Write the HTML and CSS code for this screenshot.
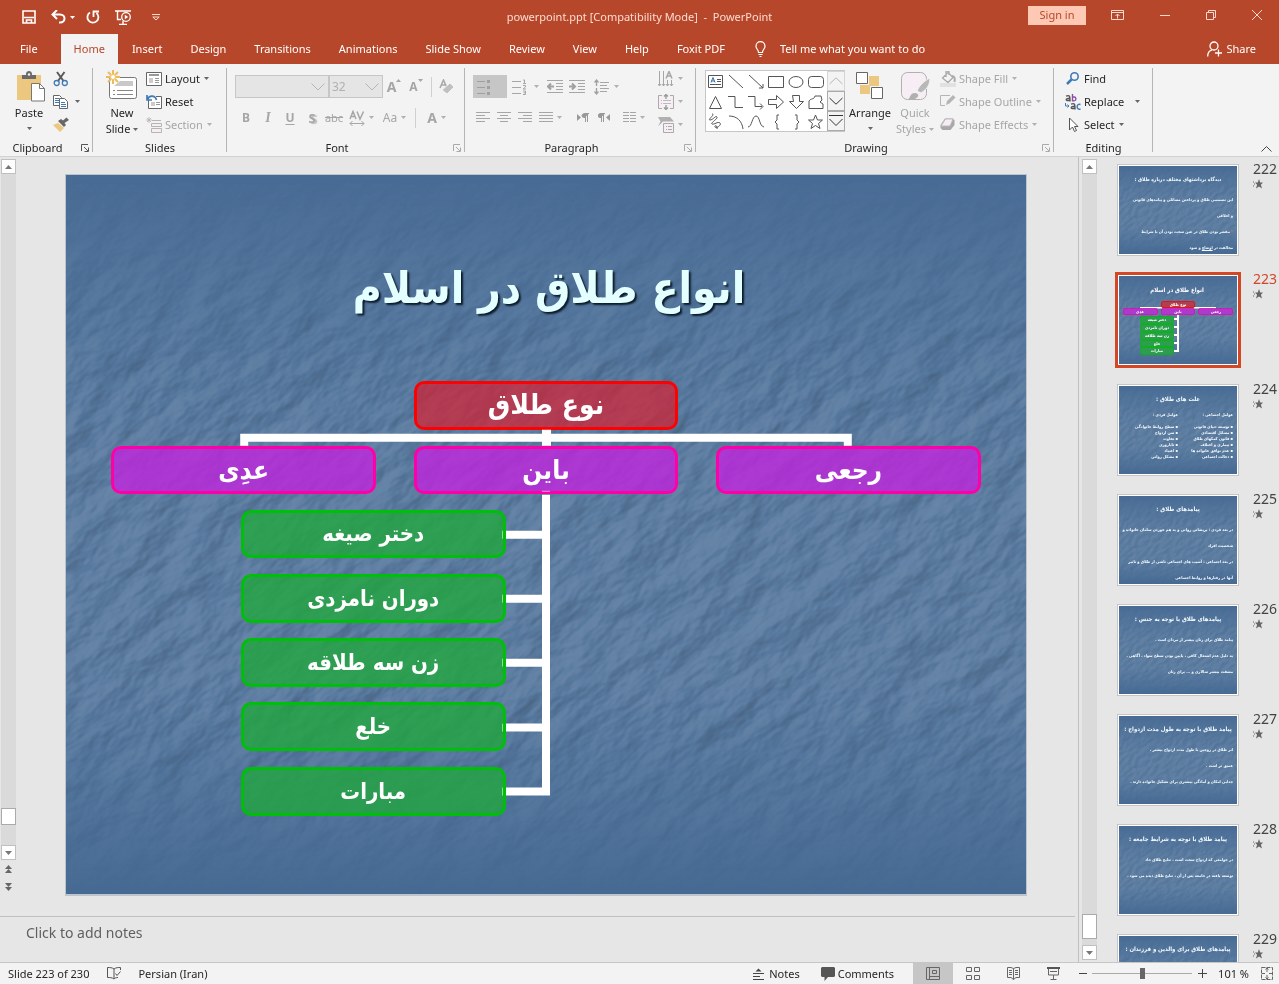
FILE: index.html
```html
<!DOCTYPE html>
<html lang="en">
<head>
<meta charset="utf-8">
<title>powerpoint.ppt [Compatibility Mode] - PowerPoint</title>
<link rel="stylesheet" href="styles.css">
</head>
<body>
<svg class="defs" width="0" height="0" aria-hidden="true">
  <defs>
    <linearGradient id="sea" x1="0" y1="0" x2="0" y2="1">
      <stop offset="0" stop-color="#476a94"/><stop offset=".12" stop-color="#4e7199"/><stop offset=".4" stop-color="#597a9f"/><stop offset=".7" stop-color="#597a9f"/><stop offset=".88" stop-color="#4e7199"/><stop offset="1" stop-color="#456992"/>
    </linearGradient>
    <linearGradient id="fade" x1="0" y1="0" x2="0" y2="1">
      <stop offset="0" stop-color="#000"/><stop offset=".3" stop-color="#fff"/><stop offset=".75" stop-color="#fff"/><stop offset="1" stop-color="#000"/>
    </linearGradient>
    <mask id="fademask"><rect width="960" height="720" fill="url(#fade)"/></mask>
    <filter id="rock" x="0" y="0" width="1" height="1" color-interpolation-filters="sRGB">
      <feTurbulence type="fractalNoise" baseFrequency="0.018 0.032" numOctaves="4" seed="8"/>
      <feDiffuseLighting surfaceScale="9" diffuseConstant=".78" lighting-color="#fff"><feDistantLight azimuth="250" elevation="45"/></feDiffuseLighting>
    </filter>
    <symbol id="slide-bg" viewBox="0 0 960 720" preserveAspectRatio="none">
      <rect width="960" height="720" fill="url(#sea)"/>
      <g mask="url(#fademask)" class="grain"><rect x="-200" y="-260" width="1360" height="1240" transform="rotate(-38 480 360)" filter="url(#rock)"/></g>
    </symbol>
    <symbol id="down" viewBox="0 0 5 3"><path d="M0 0h5L2.500 3z" fill="currentColor"/></symbol>
    <symbol id="launch" viewBox="0 0 8 8"><path d="M.5 7V.5H7M3 3l4 4M7.500 3.500v4h-4" fill="none" stroke="currentColor"/></symbol>
    <symbol id="star" viewBox="0 0 12 10"><path d="M6 0l1.200 3.500H10L7.900 5.800 9 9.500 6 7.400 3 9.500 4.100 5.800 2 3.500h2.800z" fill="currentColor"/><path d="M0 3h1M1 5h1M0 7h1" stroke="currentColor"/></symbol>
  </defs>
</svg>

<header class="top">
  <div class="titlebar">
    <div class="quick">
      <button class="ico" aria-label="Save"><svg width="14" height="14" viewBox="0 0 14 14"><path d="M1 1h12v12H1zM2 7.500h10M4.500 13V10h5v3" fill="none" stroke="#fff" stroke-width="1.600"/></svg></button>
      <button class="ico undo" aria-label="Undo"><svg width="15" height="14" viewBox="0 0 15 14"><path d="M6 0L1.500 4.500 6 9M2 4.500h7c6 0 6 8 0 8H8" fill="none" stroke="#fff" stroke-width="2"/></svg><svg class="dn light" width="5" height="3"><use href="#down"/></svg></button>
      <button class="ico" aria-label="Repeat"><svg width="14" height="14" viewBox="0 0 14 14"><path d="M4 2.500A5.500 5.500 0 1 0 10.500 3M7.500 7V1.500H13" fill="none" stroke="#fff" stroke-width="1.800"/></svg></button>
      <button class="ico show" aria-label="Start slide show"><svg width="17" height="15" viewBox="0 0 17 15"><path d="M0 1h16M2.500 1v8.500H6M8 11v3M4 14.500h8" fill="none" stroke="#fff" stroke-width="1.400"/><circle cx="11" cy="7" r="4.300" fill="#b7472a" stroke="#fff" stroke-width="1.300"/><path d="M9.800 4.800l3.400 2.200-3.400 2.200z" fill="#fff"/></svg></button>
      <button class="ico" aria-label="Customize"><svg width="8" height="7" viewBox="0 0 8 7"><path d="M0 .5h8M.8 3L4 6l3.200-3z" fill="none" stroke="#fbd9ce"/></svg></button>
    </div>
    <h1 class="doc">powerpoint.ppt [Compatibility Mode]&nbsp; -&nbsp; PowerPoint</h1>
    <div class="win">
      <button class="signin">Sign in</button>
      <button class="ico" aria-label="Ribbon options"><svg width="13" height="10" viewBox="0 0 13 10"><path d="M.5.5h12v9H.5zM.5 2.500h12M6.500 8.500V4M4.500 6l2-2 2 2" fill="none" stroke="#fbd9ce"/></svg></button>
      <button class="ico" aria-label="Minimize"><svg width="10" height="10" viewBox="0 0 10 10"><path d="M0 5.500h10" stroke="#fbd9ce"/></svg></button>
      <button class="ico" aria-label="Restore"><svg width="10" height="10" viewBox="0 0 10 10"><path d="M.5 2.500h7v7h-7zM2.500 2.500v-2h7v7h-2" fill="none" stroke="#fbd9ce"/></svg></button>
      <button class="ico" aria-label="Close"><svg width="10" height="10" viewBox="0 0 10 10"><path d="M0 0l10 10M10 0L0 10" stroke="#fbd9ce"/></svg></button>
    </div>
  </div>
  <nav class="tabs">
    <button class="file">File</button><button class="on">Home</button><button>Insert</button><button>Design</button><button>Transitions</button><button>Animations</button><button>Slide Show</button><button>Review</button><button>View</button><button>Help</button><button>Foxit PDF</button>
    <button class="tell"><svg width="11" height="16" viewBox="0 0 11 16"><path d="M3.500 11.500C3.500 8.500 1 8 1 5.200a4.500 4.500 0 0 1 9 0C10 8 7.500 8.500 7.500 11.500zM3.500 13.500h4M4.500 15.500h2" fill="none" stroke="#fff" stroke-width="1.200"/></svg>Tell me what you want to do</button>
    <button class="share"><svg width="15" height="16" viewBox="0 0 15 16"><circle cx="7" cy="5" r="4" fill="none" stroke="#fff" stroke-width="1.300"/><path d="M.7 15.500c0-3.500 2-6 4.300-6.600M8 12h7M11.500 8.500v7" fill="none" stroke="#fff" stroke-width="1.300"/></svg>Share</button>
  </nav>
</header>

<section class="ribbon" aria-label="Home">
  <div class="group clip">
    <div class="body">
      <button class="big"><svg width="28" height="32" viewBox="0 0 28 32"><path d="M0 5h24v25H0z" fill="#ecc77f"/><path d="M5 9V5h4V4c0-4 6-4 6 0v1h4v4z" fill="#6a6a6a"/><circle cx="12" cy="4.500" r="1.200" fill="#f3f3f3"/><path d="M14.500 13.500h8l5 5V31h-13z" fill="#fff" stroke="#777"/><path d="M22.500 13.500v5h5" fill="none" stroke="#777"/></svg><span>Paste</span><svg class="dn" width="5" height="3"><use href="#down"/></svg></button>
      <div class="col">
        <button class="row" aria-label="Cut"><svg width="16" height="16" viewBox="0 0 16 16"><path d="M4 1l6.500 9M11.500 1L5 10" stroke="#5a5a5a" stroke-width="2" fill="none"/><circle cx="3.700" cy="12" r="2.500" fill="none" stroke="#3f7ab5" stroke-width="1.300"/><circle cx="11.800" cy="12" r="2.500" fill="none" stroke="#3f7ab5" stroke-width="1.300"/></svg></button>
        <button class="row" aria-label="Copy"><svg width="16" height="16" viewBox="0 0 16 16"><path d="M.5 1.500h6l2 2v8h-8z" fill="#fff" stroke="#666"/><path d="M2 4.500h4M2 6.500h4M2 8.500h4" stroke="#3f7ab5"/><path d="M6.500 4.500h5l3 3v7h-8z" fill="#fff" stroke="#666"/><path d="M8 8.500h4M8 10.500h5M8 12.500h5" stroke="#3f7ab5"/></svg><svg class="dn" width="5" height="3"><use href="#down"/></svg></button>
        <button class="row" aria-label="Format painter"><svg width="16" height="16" viewBox="0 0 16 16"><path d="M0 8l5-2 6 5-4 4z" fill="#ecc77f"/><path d="M5 4l6 6 2-2-1.500-2L16 3l-2.500-2.500L10 3.500 8 2z" fill="#666"/></svg></button>
      </div>
    </div>
    <footer>Clipboard<svg class="launch" width="8" height="8"><use href="#launch"/></svg></footer>
  </div>

  <div class="group slides">
    <div class="body">
      <button class="big"><svg width="32" height="32" viewBox="0 0 32 32"><rect x="3.500" y="7.500" width="27" height="21" rx="2" fill="#fff" stroke="#777"/><path d="M14 11h13v5H8z" fill="#c8c8c8"/><path d="M7 20.500h2M11 20.500h16M7 24.500h2M11 24.500h16" stroke="#888"/><circle cx="7" cy="7" r="3" fill="#fff"/><path d="M7 0v4M7 10v4M0 7h4M10 7h4M2 2l3 3M9 9l3 3M12 2L9 5M5 9l-3 3" stroke="#edbb5c" stroke-width="2"/><circle cx="7" cy="7" r="2.500" fill="#fff" stroke="#edbb5c"/></svg><span>New</span><span>Slide <svg class="dn" width="5" height="3"><use href="#down"/></svg></span></button>
      <div class="col">
        <button class="row"><svg width="16" height="16" viewBox="0 0 16 16"><path d="M.5 1.500h15v13H.5z" fill="#fff" stroke="#666"/><path d="M3 4h10" stroke="#999" stroke-width="2"/><path d="M3 7h4v5H3z" fill="#ccc"/><path d="M9 7.500h4M9 9.500h4M9 11.500h4" stroke="#999"/></svg>Layout<svg class="dn" width="5" height="3"><use href="#down"/></svg></button>
        <button class="row"><svg width="16" height="16" viewBox="0 0 16 16"><path d="M2.500 6v8.500h13v-12H10" fill="#fff" stroke="#666"/><path d="M5 8h4v4H5z" fill="#ccc"/><path d="M10 8.500h4M10 10.500h4" stroke="#999"/><path d="M1 1v5h5M1.500 5.500C3 1 9 1 10.500 6" fill="none" stroke="#3f7ab5" stroke-width="1.700"/></svg>Reset</button>
        <button class="row off"><svg width="16" height="16" viewBox="0 0 16 16"><path d="M6 3.500h9M5.500 6.500h10v3h-10zM5.500 11.500h10v4h-10z" fill="#f6eef4" stroke="#b5b5b5"/><path d="M3 0v6M0 3h6M1 1l4 4M5 1L1 5" stroke="#b5b5b5" stroke-width=".8"/></svg>Section<svg class="dn" width="5" height="3"><use href="#down"/></svg></button>
      </div>
    </div>
    <footer>Slides</footer>
  </div>

  <div class="group font off">
    <div class="body lines">
      <div class="line">
        <span class="combo face"><input aria-label="Font" value=""><svg width="14" height="8" viewBox="0 0 14 8"><path d="M.5.5L7 7 13.500.5" fill="none" stroke="currentColor"/></svg></span><span class="combo size"><input aria-label="Font size" value="32"><svg width="14" height="8" viewBox="0 0 14 8"><path d="M.5.5L7 7 13.500.5" fill="none" stroke="currentColor"/></svg></span>
        <button class="t grow" aria-label="Grow font"><b>A</b><svg width="5" height="3" viewBox="0 0 5 3"><path d="M0 3h5L2.500 0z" fill="currentColor"/></svg></button>
        <button class="t shrink" aria-label="Shrink font"><b>A</b><svg width="5" height="3"><use href="#down"/></svg></button>
        <i class="sep"></i>
        <button class="t" aria-label="Clear formatting"><svg width="16" height="16" viewBox="0 0 16 16"><path d="M1 9L4.500 1 8 9M2 6h5" fill="none" stroke="#aaa" stroke-width="1.600"/><path d="M3 11l8-7 4 4-7 7z" fill="#c0c0c0" stroke="#f3f3f3"/></svg></button>
      </div>
      <div class="line">
        <button class="t"><b>B</b></button><button class="t"><i class="it">I</i></button><button class="t"><b class="un">U</b></button><button class="t"><b class="sh">S</b></button><button class="t"><s>abc</s></button>
        <button class="t wide" aria-label="Character spacing"><svg width="16" height="16" viewBox="0 0 16 16"><path d="M1 9L4 1.500 7 9M2 6.500h4M8 1.500L11 9l3.500-7.500" fill="none" stroke="#a6a6a6" stroke-width="1.500"/><path d="M1 13.500h14M3.500 11L1 13.500 3.500 16M12.500 11l2.500 2.500-2.500 2.500" fill="none" stroke="#a6a6a6"/></svg><svg class="dn" width="5" height="3"><use href="#down"/></svg></button>
        <button class="t wide">Aa<svg class="dn" width="5" height="3"><use href="#down"/></svg></button>
        <i class="sep"></i>
        <button class="t wide"><b class="bigA">A</b><svg class="dn" width="5" height="3"><use href="#down"/></svg></button>
      </div>
    </div>
    <footer>Font<svg class="launch" width="8" height="8"><use href="#launch"/></svg></footer>
  </div>

  <div class="group para off">
    <div class="body">
      <div class="lines">
        <div class="line">
          <button class="t bul" aria-label="Bullets"><svg width="14" height="16" viewBox="0 0 14 16"><path d="M0 2.500h8M0 8.500h8M0 14.500h8" stroke="#a0a0a0"/><path d="M10 2.500h3M10 8.500h3M10 14.500h3" stroke="#a0a0a0" stroke-width="3"/></svg></button>
          <button class="t num" aria-label="Numbering"><svg width="14" height="16" viewBox="0 0 14 16"><path d="M0 2.500h9M0 8.500h9M0 14.500h9M11 1h1.500v3.500M11 4.500h3M11 6.500h2.500v1.500L11 10h3M11 12h2.500v3.500H11M11.500 13.800h2" fill="none" stroke="#a6a6a6"/></svg><svg class="dn" width="5" height="3"><use href="#down"/></svg></button>
          <button class="t" aria-label="Decrease indent"><svg width="16" height="14" viewBox="0 0 16 14"><path d="M0 .5h16M9 3.500h7M9 6.500h7M9 9.500h7M0 12.500h16" stroke="#a6a6a6"/><path d="M7 6.500H1M4 3.500l-3 3 3 3" fill="none" stroke="#a0a0a0" stroke-width="2"/></svg></button>
          <button class="t" aria-label="Increase indent"><svg width="16" height="14" viewBox="0 0 16 14"><path d="M0 .5h16M9 3.500h7M9 6.500h7M9 9.500h7M0 12.500h16" stroke="#a6a6a6"/><path d="M0 6.500h6M3 3.500l3 3-3 3" fill="none" stroke="#a0a0a0" stroke-width="2"/></svg></button>
          <button class="t spacing" aria-label="Line spacing"><svg width="15" height="16" viewBox="0 0 15 16"><path d="M2.500 1v6M2.500 9v6M.5 3.500l2-2.500 2 2.500M.5 12.500l2 2.500 2-2.500" fill="none" stroke="#a0a0a0" stroke-width="1.300"/><path d="M6 3.500h9M6 6.500h7M6 9.500h9M6 12.500h7" stroke="#a6a6a6"/></svg><svg class="dn" width="5" height="3"><use href="#down"/></svg></button>
        </div>
        <div class="line">
          <button class="t" aria-label="Align left"><svg width="14" height="11" viewBox="0 0 14 11"><path d="M0 .5h14M0 3.500h9M0 6.500h14M0 9.500h9" stroke="#a6a6a6"/></svg></button>
          <button class="t" aria-label="Center"><svg width="14" height="11" viewBox="0 0 14 11"><path d="M0 .5h14M3 3.500h8M0 6.500h14M3 9.500h8" stroke="#a6a6a6"/></svg></button>
          <button class="t" aria-label="Align right"><svg width="14" height="11" viewBox="0 0 14 11"><path d="M0 .5h14M5 3.500h9M0 6.500h14M5 9.500h9" stroke="#a6a6a6"/></svg></button>
          <button class="t wide just" aria-label="Justify"><svg width="14" height="11" viewBox="0 0 14 11"><path d="M0 .5h14M0 3.500h14M0 6.500h14M0 9.500h14" stroke="#a6a6a6"/></svg><svg class="dn" width="5" height="3"><use href="#down"/></svg></button>
          <button class="t" aria-label="Left to right"><svg width="12" height="9" viewBox="0 0 12 9"><path d="M0 1l4 3.500L0 8z" fill="#999"/><path d="M8 4.500C4 5 4 .5 8 .5h4M8.500 0v9M10.500 0v9" fill="#999" stroke="#999"/></svg></button>
          <button class="t" aria-label="Right to left"><svg width="12" height="9" viewBox="0 0 12 9"><path d="M12 1L8 4.500 12 8z" fill="#999"/><path d="M3 4.500C-1 5-1 .5 3 .5h4M3.500 0v9M5.500 0v9" fill="#999" stroke="#999"/></svg></button>
          <button class="t wide cols" aria-label="Columns"><svg width="13" height="11" viewBox="0 0 13 11"><path d="M0 .5h6M0 3.500h6M0 6.500h6M0 9.500h6M7 .5h6M7 3.500h6M7 6.500h6M7 9.500h6" stroke="#a6a6a6"/></svg><svg class="dn" width="5" height="3"><use href="#down"/></svg></button>
        </div>
      </div>
      <div class="col">
        <button class="row" aria-label="Text direction"><svg width="16" height="16" viewBox="0 0 16 16"><path d="M1.500 0v15M5.500 0v15M9.500 9v6M13.500 9v6M0 13l1.500 2L3 13M4 13l1.500 2L7 13M8 13l1.500 2 1.500-2M12 13l1.500 2 1.500-2" fill="none" stroke="#a6a6a6"/><path d="M8 7.500l3-7 3 7M9 5h4" fill="none" stroke="#a6a6a6" stroke-width="1.500"/></svg><svg class="dn" width="5" height="3"><use href="#down"/></svg></button>
        <button class="row" aria-label="Align text"><svg width="16" height="16" viewBox="0 0 16 16"><path d="M4 1.500H.5v13H4M12 1.500h3.500v13H12" fill="#f6eef4" stroke="#aaa"/><path d="M8 0v5M8 11v5M6 2.500L8 .5l2 2M6 13.500l2 2 2-2" fill="none" stroke="#999" stroke-width="1.400"/><path d="M3 6.500h1M5 6.500h8M3 9.500h1M5 9.500h8" stroke="#c5b5c2"/></svg><svg class="dn" width="5" height="3"><use href="#down"/></svg></button>
        <button class="row" aria-label="Convert to SmartArt"><svg width="16" height="16" viewBox="0 0 16 16"><path d="M0 0h12l4 4.500H5L0 9.500 2.500 4.500z" fill="#b0b0b0"/><path d="M5.500 6.500h10v9h-10z" fill="#f6eef4" stroke="#aaa"/><path d="M8 9.500h1M10 9.500h4M8 12.500h1M10 12.500h4" stroke="#aaa"/></svg><svg class="dn" width="5" height="3"><use href="#down"/></svg></button>
      </div>
    </div>
    <footer>Paragraph<svg class="launch" width="8" height="8"><use href="#launch"/></svg></footer>
  </div>

  <div class="group draw">
    <div class="body">
      <div class="gallery">
        <svg class="shapes" width="120" height="60" viewBox="0 0 120 60" aria-label="Shapes"><g fill="none" stroke="#555">
          <path d="M2.500 4.500h14v12h-14zM11 8.500h4M11 10.500h4M4 13.500h11"/><path d="M5 11.500L7 6.500l2 5M5.500 10h3" stroke="#2f6db0"/>
          <path d="M23 4l14 13M43 4l14 13M57 13v4h-4M62.500 5.500h15v11h-15z"/><ellipse cx="90" cy="11" rx="7" ry="5.500"/><rect x="102.500" y="5.500" width="15" height="11" rx="3"/>
          <path d="M3.500 37.500L9.500 25.500l6 12zM22 25.500h7v11h8M42 25.500h7v10h7M54 32.500l3 3-3 3M62.500 28.500h8v-4l7 6.500-7 6.500v-4h-8zM86.500 24.500h7v6h4l-7 7-7-7h4zM103 30c2-3 5-1 6-5h6l1 4-2 2 3 2v4.500h-14z"/>
          <path d="M6 43c4 0-5 6-2 6s6-5 7-3-7 6-5 7 6-3 8-1-4 6-5 4 3-2 2 2M23 45c8 0 13 5 14 13M42 56c4 0 4-11 8-11s3 10 8 11M73 44h-2v5l-2 2 2 2v5h2M89 44h2v5l2 2-2 2v5h-2"/><path d="M109.500 44l2 5h5l-4 3.500 1.500 5-4.500-3-4.500 3 1.500-5-4-3.500h5z"/></g></svg>
        <div class="gscroll"><button class="off" aria-label="Up"><svg width="14" height="8" viewBox="0 0 14 8"><path d="M.5 7L7 .8 13.500 7" fill="none" stroke="#b5b5b5"/></svg></button><button aria-label="Down"><svg width="14" height="8" viewBox="0 0 14 8"><path d="M.5 1L7 7.200 13.500 1" fill="none" stroke="#333"/></svg></button><button aria-label="More"><svg width="14" height="12" viewBox="0 0 14 12"><path d="M0 .5h14M.5 4L7 10.500 13.500 4" fill="none" stroke="#333"/></svg></button></div>
      </div>
      <button class="big arr"><svg width="28" height="32" viewBox="0 0 28 32"><path d="M13 6h10v10H13zM4 15h10v9H4z" fill="#ecc77f"/><path d="M.5 2.500h11v11H.5zM15.500 17.500h11v11h-11z" fill="#fff" stroke="#666"/></svg><span>Arrange</span><svg class="dn" width="5" height="3"><use href="#down"/></svg></button>
      <button class="big qs off"><svg width="30" height="32" viewBox="0 0 30 32"><rect x="1.500" y="2.500" width="25" height="27" rx="6" fill="#f6eef4" stroke="#b0b0b0"/><path d="M30 8c0 9-5 12-9 15l-4-2C19 16 24 11 30 8z" fill="#b8b8b8" stroke="#f3f3f3"/><path d="M7 30c4-1 2-7 8-7 7 1 2 8-8 7z" fill="#b0b0b0"/></svg><span>Quick</span><span>Styles <svg class="dn" width="5" height="3"><use href="#down"/></svg></span></button>
      <div class="col off">
        <button class="row"><svg width="16" height="16" viewBox="0 0 16 16"><path d="M2.500 7L8 1.500l5 5-5 5zM6 6V1c0-1.500 3-1.500 3 0v3" fill="none" stroke="#aaa" stroke-width="1.300"/><path d="M12 5c3 0 3 3 2.500 6" fill="none" stroke="#aaa" stroke-width="2"/><path d="M0 12h16v4H0z" fill="#e3e0e3"/></svg>Shape Fill<svg class="dn" width="5" height="3"><use href="#down"/></svg></button>
        <button class="row"><svg width="16" height="16" viewBox="0 0 16 16"><path d="M10 1.500H.5v10H5" fill="none" stroke="#b5b5b5"/><path d="M6 11l1-4 6-6 2.500 2.500-6 6z" fill="#b5b5b5"/></svg>Shape Outline<svg class="dn" width="5" height="3"><use href="#down"/></svg></button>
        <button class="row"><svg width="16" height="16" viewBox="0 0 16 16"><path d="M5 1.500h8l1.500 2V8l-4 5H2.500L.5 11V8z" fill="#a8a8a8"/><path d="M5.500 2h7.500L10 9H1z" fill="#f6eef4" stroke="#bbb"/></svg>Shape Effects<svg class="dn" width="5" height="3"><use href="#down"/></svg></button>
      </div>
    </div>
    <footer>Drawing<svg class="launch off" width="8" height="8"><use href="#launch"/></svg></footer>
  </div>

  <div class="group edit">
    <div class="body">
      <div class="col">
        <button class="row"><svg width="16" height="16" viewBox="0 0 16 16"><circle cx="9.500" cy="5.500" r="3.700" fill="none" stroke="#3f7ab5" stroke-width="1.600"/><path d="M6.500 8.500L2 13" stroke="#3f7ab5" stroke-width="2.500"/></svg>Find</button>
        <button class="row"><svg width="16" height="16" viewBox="0 0 16 16" aria-hidden="true"><g fill="none" stroke-width="1.400"><path d="M1 2.200c4-1.500 4 0 4 5.300M5 4.200C0 3.800 0 8 5 6M6 10.200c4-1.500 4 0 4 5.300M10 12.200c-5-.4-5 3.800 0 1.800" stroke="#555"/><path d="M7.500 0v7.500M7.500 3.500C12 1 12 8.500 7.500 6.500" stroke="#8a4fa8"/><path d="M15.500 10.500c-4.500-1.500-4.500 6 0 4.500" stroke="#3f7ab5"/></g><path d="M.5 9v3H4M2.500 10.500L4 12l-1.500 1.500" fill="none" stroke="#3f7ab5"/></svg>Replace<svg class="dn far" width="5" height="3"><use href="#down"/></svg></button>
        <button class="row"><svg width="16" height="16" viewBox="0 0 16 16"><path d="M4.500 1v12l3-3 2 4.500 2-1L9.500 9.500H13z" fill="#fff" stroke="#555"/></svg>Select<svg class="dn" width="5" height="3"><use href="#down"/></svg></button>
      </div>
    </div>
    <footer>Editing</footer>
  </div>
  <button class="collapse" aria-label="Collapse ribbon"><svg width="11" height="6" viewBox="0 0 11 6"><path d="M.5 5.500l5-5 5 5" fill="none" stroke="#444"/></svg></button>
</section>

<main class="work">
  <div class="center">
    <div class="editor">
      <div class="bar left">
        <button aria-label="Scroll up"><svg width="7" height="4" viewBox="0 0 7 4"><path d="M0 4h7L3.500 0z" fill="#777"/></svg></button>
        <div class="track"><div class="thumb"></div></div>
        <button aria-label="Scroll down"><svg width="7" height="4" viewBox="0 0 7 4"><path d="M0 0h7L3.500 4z" fill="#777"/></svg></button>
        <button class="bare" aria-label="Previous slide"><svg width="7" height="8" viewBox="0 0 7 8"><path d="M0 4h7L3.500 0zM0 8h7L3.500 4z" fill="#666"/></svg></button>
        <button class="bare" aria-label="Next slide"><svg width="7" height="8" viewBox="0 0 7 8"><path d="M0 0h7L3.500 4zM0 4h7L3.500 8z" fill="#666"/></svg></button>
      </div>
      <article class="slide" dir="rtl" lang="fa">
        <svg class="bg" aria-hidden="true"><use href="#slide-bg"/></svg>
        <h2>انواع طلاق در اسلام</h2>
        <div class="node root">نوع طلاق</div>
        <div class="node kind k1">عدِی</div>
        <div class="node kind k2">باین</div>
        <div class="node kind k3">رجعی</div>
        <div class="node sub s1">دختر صیغه</div>
        <div class="node sub s2">دوران نامزدی</div>
        <div class="node sub s3">زن سه طلاقه</div>
        <div class="node sub s4">خلع</div>
        <div class="node sub s5">مبارات</div>
        <svg class="wires" viewBox="0 0 960 720" aria-hidden="true"><path d="M476 255h9v4h301v12h-8v-4H485v4h-9v-4H182v4h-8v-12h302zM476 320h8v301h-44v-8h36v-56h-36v-8h36v-57h-36v-8h36v-56h-36v-8h36v-56h-36v-8h36z" fill="#fff"/><path d="M436.500 356v8M436.500 420v8M436.500 484v8M436.500 549v8M436.500 613v8" stroke="#8be08f"/><path d="M476 316.500h8" stroke="#ff8fe0"/></svg>
      </article>
    </div>
    <div class="notes">Click to add notes</div>
  </div>
  <aside class="panel">
    <div class="bar">
      <button aria-label="Scroll up"><svg width="7" height="4" viewBox="0 0 7 4"><path d="M0 4h7L3.500 0z" fill="#777"/></svg></button>
      <div class="track"><div class="thumb low"></div></div>
      <button aria-label="Scroll down"><svg width="7" height="4" viewBox="0 0 7 4"><path d="M0 0h7L3.500 4z" fill="#777"/></svg></button>
    </div>
    <ol class="thumbs">
      <li><div class="mini a" dir="rtl" lang="fa"><svg class="bg"><use href="#slide-bg"/></svg><h3>دیدگاه برداشتهای مختلف درباره طلاق :</h3><p>این تصمیمی طلاق و پرداختن مسائلی و پیامدهای قانونی</p><p>و اخلاقی</p><p><i>*</i> مقصر بودن طلاق در عین سخت بودن آن با شرایط</p><p>مخالفت در <u>اوضاع</u> و سود</p></div><div class="no">222<svg width="12" height="10"><use href="#star"/></svg></div></li>
      <li class="sel"><div class="mini" dir="rtl" lang="fa"><svg class="bg"><use href="#slide-bg"/></svg>
        <svg class="chart" viewBox="0 0 118 88"><path d="M21 31h76v1.500H21zM58 37h2v39h-5v-2h3v-6h-3v-2h3v-6h-3v-2h3v-6h-3v-2h3v-6h-3v-2h3z" fill="#fff"/><rect x="42.500" y="25.500" width="33" height="6" rx="1.500" fill="#b0404f" stroke="#e11"/><g fill="#ad39cf" stroke="#f000a8" stroke-width=".7"><rect x="4.500" y="32.500" width="34" height="6" rx="1.500"/><rect x="42.500" y="32.500" width="33" height="6" rx="1.500"/><rect x="79.500" y="32.500" width="34" height="6" rx="1.500"/></g><g fill="#2e9d51" stroke="#0b0" stroke-width=".8"><rect x="21.500" y="40.500" width="33" height="7" rx="1.500"/><rect x="21.500" y="48.500" width="33" height="7" rx="1.500"/><rect x="21.500" y="56.500" width="33" height="7" rx="1.500"/><rect x="21.500" y="64.500" width="33" height="6" rx="1.500"/><rect x="21.500" y="71.500" width="33" height="7" rx="1.500"/></g>
        <g class="ct"><text x="58" y="16" class="ctt">انواع طلاق در اسلام</text><text x="59" y="30">نوع طلاق</text><text x="21" y="37">عدِی</text><text x="59" y="37">باین</text><text x="97" y="37">رجعی</text><text x="38" y="45">دختر صیغه</text><text x="38" y="53">دوران نامزدی</text><text x="38" y="61">زن سه طلاقه</text><text x="38" y="69">خلع</text><text x="38" y="76">مبارات</text></g></svg></div><div class="no">223<svg width="12" height="10"><use href="#star"/></svg></div></li>
      <li><div class="mini" dir="rtl" lang="fa"><svg class="bg"><use href="#slide-bg"/></svg><h3>علت های طلاق :</h3><div class="two"><ul><li>عوامل اجتماعی :</li><li>▪ توسعه دنیای قانونی</li><li>▪ مسائل اقتصادی</li><li>▪ قانون کمکهای طلاق</li><li>▪ بیماری و اختلاف</li><li>▪ عدم توافق خانواده ها</li><li>▪ دخالت اجتماعی</li></ul><ul><li>عوامل فردی :</li><li>▪ سطح روابط خانوادگی</li><li>▪ سن ازدواج</li><li>▪ تفاوت</li><li>▪ ناباروری</li><li>▪ اعتیاد</li><li>▪ مشکل روانی</li></ul></div></div><div class="no">224<svg width="12" height="10"><use href="#star"/></svg></div></li>
      <li><div class="mini" dir="rtl" lang="fa"><svg class="bg"><use href="#slide-bg"/></svg><h3>پیامدهای طلاق :</h3><p>در بعد فردی : پریشانی روانی و به هم خوردن سامان خانواده و</p><p>شخصیت افراد</p><p>در بعد اجتماعی : آسیب های اجتماعی ناشی از طلاق و تاثیر</p><p>آنها در رفتارها و روابط اجتماعی</p></div><div class="no">225<svg width="12" height="10"><use href="#star"/></svg></div></li>
      <li><div class="mini" dir="rtl" lang="fa"><svg class="bg"><use href="#slide-bg"/></svg><h3>پیامدهای طلاق با توجه به جنس :</h3><p>پیامد طلاق برای زنان بیشتر از مردان است .</p><p>به دلیل عدم اشتغال کافی ، پایین بودن سطح سواد ، آگاهی .</p><p>مشقت بیشتر سالاری و ... برای زنان</p></div><div class="no">226<svg width="12" height="10"><use href="#star"/></svg></div></li>
      <li><div class="mini" dir="rtl" lang="fa"><svg class="bg"><use href="#slide-bg"/></svg><h3>پیامد طلاق با توجه به طول مدت ازدواج :</h3><p>اثر طلاق در زوجین با طول مدت ازدواج بیشتر ،</p><p>عمیق تر است .</p><p>جدایی امکان و آمادگی بیشتری برای تشکیل خانواده دارند .</p></div><div class="no">227<svg width="12" height="10"><use href="#star"/></svg></div></li>
      <li><div class="mini" dir="rtl" lang="fa"><svg class="bg"><use href="#slide-bg"/></svg><h3>پیامد طلاق با توجه به شرایط جامعه :</h3><p>در جوامعی که ازدواج سخت است ، نتایج طلاق حاد</p><p>توسعه یافته در جامعه پس از آن ، نتایج طلاق دیده می شود .</p></div><div class="no">228<svg width="12" height="10"><use href="#star"/></svg></div></li>
      <li><div class="mini" dir="rtl" lang="fa"><svg class="bg"><use href="#slide-bg"/></svg><h3>پیامدهای طلاق برای والدین و فرزندان :</h3></div><div class="no">229<svg width="12" height="10"><use href="#star"/></svg></div></li>
    </ol>
  </aside>
</main>

<footer class="status">
  <span class="count">Slide 223 of 230</span>
  <button class="st" aria-label="Spelling"><svg width="14" height="13" viewBox="0 0 14 13"><path d="M7 2v10M7 2C5 .5 3 .5.500 .5v10C3 10.500 5 10.500 7 12c1-1 2-1.500 4-1.500M7 2C9 .5 11 .5 13.500.5V3M8.500 6.500L10 8.500l3.500-4" fill="none" stroke="#555"/></svg></button>
  <button class="st lang">Persian (Iran)</button>
  <button class="st notesb"><svg width="11" height="12" viewBox="0 0 11 12"><path d="M2.500 3.500L5.500.5l3 3z" fill="#444"/><path d="M0 5.500h11M0 8.500h7M0 11.500h11" stroke="#444"/></svg>Notes</button>
  <button class="st comm"><svg width="14" height="14" viewBox="0 0 14 14"><path d="M1 0h12l1 1v8l-1 1H7l-3.500 4V10H1L0 9V1z" fill="#555"/></svg>Comments</button>
  <button class="view on" aria-label="Normal"><svg width="14" height="13" viewBox="0 0 14 13"><path d="M.5.5h13v12H.5zM3.500.5v12M3.500 9.500h10M6.500 3.500h4v3h-4z" fill="none" stroke="#666"/></svg></button>
  <button class="view" aria-label="Slide sorter"><svg width="14" height="13" viewBox="0 0 14 13"><path d="M.5.500h5v4h-5zM8.500.5h5v4h-5zM.5 8.500h5v4h-5zM8.500 8.500h5v4h-5z" fill="none" stroke="#666"/></svg></button>
  <button class="view" aria-label="Reading view"><svg width="13" height="13" viewBox="0 0 13 13"><path d="M.5.500H4l2.500 1L9 .5h3.500v10H9l-2.500 2-2.500-2H.5zM6.500 1.500v11M2 3.500h3M2 5.500h3M2 7.500h3M8 3.500h3M8 5.500h3M8 7.500h3" fill="none" stroke="#666"/></svg></button>
  <button class="view" aria-label="Slide show"><svg width="13" height="13" viewBox="0 0 13 13"><path d="M0 1h13" stroke="#555" stroke-width="2"/><path d="M1.500 2v6h10V2M3 4.500h7M6.500 8v4M3.500 12.500h6" fill="none" stroke="#666"/></svg></button>
  <button class="z" aria-label="Zoom out"><svg width="8" height="9" viewBox="0 0 8 9"><path d="M0 4.500h8" stroke="#444"/></svg></button>
  <input class="zoom" type="range" aria-label="Zoom" min="0" max="100" value="50">
  <button class="z" aria-label="Zoom in"><svg width="9" height="9" viewBox="0 0 9 9"><path d="M0 4.500h9M4.500 0v9" stroke="#444"/></svg></button>
  <button class="st pct">101 %</button>
  <button class="z" aria-label="Fit to window"><svg width="12" height="13" viewBox="0 0 12 13"><path d="M.5.500h11v12H.5z" fill="none" stroke="#666" stroke-dasharray="4 1"/><path d="M6 1v4M6 8v4M1 6.500h3M8 6.500h3M4.500 2.500L6 1l1.500 1.500M4.500 10.500L6 12l1.500-1.500" fill="none" stroke="#666"/></svg></button>
</footer>
</body>
</html>
```

FILE: styles.css
```css
* { box-sizing: border-box; }
body {
  margin: 0;
  height: 100vh;
  display: flex;
  flex-direction: column;
  overflow: hidden;
  background: #e6e6e6;
  color: #262626;
  font: 11px/16px "Noto Sans", "Open Sans", sans-serif;
}
button {
  margin: 0; padding: 0; border: 0;
  background: none; color: inherit; font: inherit;
  display: flex; align-items: center;
  white-space: nowrap;
}
svg { display: block; flex: none; }
.defs { position: absolute; }
.grain { opacity: .15; mix-blend-mode: hard-light; }

/* title bar and tabs */
.top { background: #b7472a; color: #fff; }
.titlebar { height: 34px; display: grid; grid-template-columns: 1fr auto 1fr; align-items: center; }
.quick { display: flex; gap: 11px; padding-left: 22px; align-items: center; }
.undo { gap: 4px; margin-left: 4px; }
.quick .show { margin: 0 9px 0 4px; }
.dn { color: #666; }
.dn.light { color: #fff; }
.doc { margin: 0; font-size: 11px; font-weight: 400; color: #fbdcd2; }
.win { display: flex; justify-content: flex-end; align-items: center; gap: 36px; padding: 0 17px 4px 0; }
.signin { width: 58px; height: 19px; justify-content: center; background: #fdc9b5; color: #b7472a; margin-right: -11px; }
.tabs { display: flex; height: 30px; align-items: stretch; }
.tabs button { padding: 0 14px; }
.tabs .file { padding: 0 23px 0 20px; }
.tabs .on { background: #f3f3f3; color: #b7472a; padding: 0 13px; }
.tabs .tell { gap: 14px; padding-left: 16px; }
.tabs .share { margin-left: auto; gap: 4px; padding-right: 23px; }

/* ribbon */
.ribbon { display: flex; height: 93px; flex: none; background: #f3f3f3; border-bottom: 1px solid #d2d2d2; padding-top: 3px; }
.group { display: flex; flex-direction: column; position: relative; flex: none; }
.group::after { content: ""; position: absolute; right: 0; top: 1px; bottom: 4px; width: 1px; background: #b5b5b5; }
.body { display: flex; height: 70px; flex: none; }
.group footer { display: flex; justify-content: center; height: 19px; line-height: 22px; color: #262626; position: relative; }
.launch { position: absolute; right: 4px; top: 7px; color: #555; }
.off .launch, .launch.off { color: #aaa; }
.clip { width: 93px; } .slides { width: 134px; } .font { width: 238px; } .para { width: 231px; } .draw { width: 358px; } .edit { width: 99px; }
.clip footer, .font footer, .para footer, .draw footer { padding-right: 18px; }
.off { color: #a6a6a6; }
.off .dn { color: #b0b0b0; }
.big { flex-direction: column; padding-top: 3px; }
.big > svg:first-child { margin-bottom: 3px; }
.big > .dn { margin-top: 6px; }
.big span { display: flex; align-items: center; gap: 3px; height: 16px; }
.clip .big { width: 38px; margin-left: 10px; }
.clip .big > svg:first-child { margin-left: 4px; }
.col { display: flex; flex-direction: column; }
.row { height: 23px; gap: 3px; }
.row .dn { margin-left: 1px; }
.clip .col { margin-left: 5px; }
.clip .row { gap: 5px; }
.slides .big { width: 36px; margin-left: 11px; }
.slides .col { margin-left: 6px; }
.lines { display: flex; flex-direction: column; gap: 8px; padding-top: 8px; }
.line { display: flex; height: 23px; align-items: center; }
.t { width: 22px; height: 23px; justify-content: center; gap: 4px; font-size: 12px; }
.t.wide { width: 33px; }
.font .line { padding-left: 8px; }
.combo { display: flex; align-items: center; height: 23px; border: 1px solid #c6c6c6; background: #e5e5e5; color: #b5b5b5; padding-right: 3px; }
.combo input { min-width: 0; flex: 1; border: 0; background: none; font: inherit; font-size: 12px; color: #b0b0b0; padding: 0 2px; }
.face { width: 94px; } .size { width: 54px; }
.font .grow { font-size: 14px; } .font .shrink { font-size: 12px; }
.grow, .shrink { gap: 0; }
.grow svg, .shrink svg { align-self: flex-start; margin-top: 4px; }
.sep { width: 1px; height: 20px; background: #d0d0d0; margin: 0 4px; }
.it { font-family: "Liberation Serif", serif; font-weight: 700; font-size: 14px; }
.un { text-decoration: underline; text-underline-offset: 2px; }
.sh { font-size: 13px; text-shadow: 2px 1px 1px #bbb; }
.font s { font-size: 11px; }
.bigA { font-size: 14px; }
.para .lines { width: 184px; padding-left: 8px; }
.bul { width: 34px; background: #c6c6c6; justify-content: flex-start; padding-left: 4px; }
.num { width: 37px; gap: 8px; }
.spacing { width: 34px; gap: 5px; margin-left: 1px; }
.just { margin-right: 7px; }
.cols { margin-left: 4px; }
.para .col { margin-left: 9px; }
.gallery { display: flex; width: 140px; height: 62px; margin: 3px 0 0 9px; border: 1px solid #c6c6c6; background: #fff; }
.gscroll { margin-left: auto; width: 17px; display: flex; flex-direction: column; background: #f3f3f3; }
.gscroll button { flex: 1; justify-content: center; border: 1px solid #aaa; margin-right: -1px; }
.gscroll .off { border-color: #d5d5d5; }
.arr { width: 46px; margin-left: 2px; }
.qs { width: 42px; margin-left: 1px; }
.draw .col { margin-left: 4px; }
.edit .col { margin-left: 11px; }
.row .far { margin-left: 8px; }
.collapse { margin: auto 7px 4px auto; }

/* workspace */
.work { flex: 1; min-height: 0; display: flex; }
.center { flex: 1; min-width: 0; display: flex; flex-direction: column; }
.editor { flex: 1; min-height: 0; display: flex; padding: 2px 48px 20px 1px; border-bottom: 1px solid #c0c0c0; margin-right: 3px; }
.bar { display: flex; flex-direction: column; width: 15px; flex: none; padding-bottom: 2px; }
.bar.left { padding-bottom: 0; }
.bar button { width: 15px; height: 15px; justify-content: center; background: #fff; border: 1px solid #c0c0c0; }
.bar .bare { border: 0; background: none; height: 18px; }
.track { flex: 1; background: #dadada; display: flex; flex-direction: column; justify-content: flex-end; }
.thumb { height: 17px; background: #fff; border: 1px solid #aaa; margin-bottom: 20px; }
.thumb.low { height: 25px; margin-bottom: 6px; }
.slide {
  position: relative;
  flex: 1;
  aspect-ratio: 4 / 3;
  margin: 15px 0 auto 49px;
  border: 1px solid #bcc4cc;
  font-family: "DejaVu Sans Condensed", "DejaVu Sans", sans-serif;
  font-weight: 700;
  color: #fff;
}
.bg { position: absolute; inset: 0; width: 100%; height: 100%; }
.slide h2 {
  position: absolute; left: 0; right: 0; top: 11%;
  margin: 0; padding-left: 6px; text-align: center; font-size: 44px; line-height: 68px;
  color: #e3ffff; text-shadow: 2px 2px 2px #0b1a2a;
}
.node {
  position: absolute; width: 27.600%; height: 6.800%;
  border: 3px solid; border-radius: 10px;
  display: flex; align-items: center; justify-content: center;
  font-size: 26px; line-height: 32px;
}
.root { left: 36.200%; top: 28.600%; border-color: #f00; background: rgb(220 30 45 / 68%); font-size: 28px; }
.kind { top: 37.600%; border-color: #ff00a8; background: rgb(200 30 225 / 74%); }
.k1 { left: 4.700%; } .k2 { left: 36.200%; } .k3 { left: 67.700%; }
.sub { left: 18.200%; border-color: #00bf0a; background: rgb(30 170 55 / 74%); font-size: 22px; }
.s1 { top: 46.500%; } .s2 { top: 55.500%; } .s3 { top: 64.400%; } .s4 { top: 73.300%; } .s5 { top: 82.300%; }
.wires { position: absolute; inset: 0; width: 100%; height: 100%; }
.notes { height: 45px; padding: 4px 26px; font-size: 14px; line-height: 24px; color: #5f5f5f; }

/* thumbnails */
.panel { display: flex; width: 201px; flex: none; border-left: 1px solid #c0c0c0; padding: 2px 0 0 3px; overflow: hidden; }
.thumbs { list-style: none; margin: 0; padding: 5px 0 0 17px; flex: 1; min-width: 0; overflow: hidden; }
.thumbs > li { display: flex; height: 92px; margin: 0 0 18px 3px; gap: 14px; }
.mini {
  position: relative; width: 122px; height: 92px; flex: none; padding: 1px 5px;
  border: 1px solid #c6c6c6; overflow: hidden; background: #fff;
  color: #f4fbff; font-family: "DejaVu Sans Condensed", "DejaVu Sans", sans-serif; font-weight: 700;
}
.mini .bg { inset: 1px; width: calc(100% - 2px); height: calc(100% - 2px); }
.mini h3 { position: relative; margin: 0; text-align: center; font-size: 6px; line-height: 26px; white-space: nowrap; }
.mini p { position: relative; margin: 0; font-size: 4px; line-height: 16px; white-space: nowrap; }
.mini i { color: #f66; }
.mini.a h3 { font-size: 5px; }
.two { position: relative; display: grid; grid-template-columns: 1fr 1fr; font-size: 4px; line-height: 6px; }
.two ul { list-style: none; margin: 0; padding: 0; }
.two li:first-child { margin-bottom: 6px; }
.chart { position: absolute; inset: 1px; width: 118px; height: 88px; }
.ct { fill: #fff; font-size: 4px; text-anchor: middle; }
.ctt { font-size: 6px; }
.sel .mini { outline: 3px solid #d24726; outline-offset: -1px; border-color: #d24726; }
.no { font-size: 14px; line-height: 20px; color: #444; margin-top: -5px; }
.no svg { color: #666; }
.sel .no { color: #d24726; }

/* status bar */
.status { display: flex; align-items: center; height: 22px; flex: none; background: #f3f3f3; border-top: 1px solid #c6c6c6; padding: 0 6px 0 8px; }
.count { margin-right: 18px; }
.lang { margin-left: 17px; }
.st { gap: 5px; }
.notesb { margin-left: auto; }
.comm { margin: 0 19px 0 21px; gap: 3px; }
.view { width: 40px; height: 21px; justify-content: center; }
.view.on { background: #c6c6c6; }
.z { margin-left: 6px; }
.zoom { appearance: none; width: 100px; height: 11px; margin: 0 0 0 5px; background: linear-gradient(#aaa, #aaa) center / 100% 1px no-repeat; }
.zoom::-webkit-slider-thumb { appearance: none; width: 5px; height: 11px; background: #666; }
.pct { margin: 0 6px 0 11px; }
```
